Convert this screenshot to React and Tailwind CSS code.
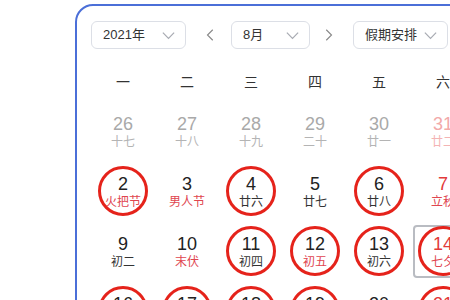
import React from 'react';

const weekdays = ['一', '二', '三', '四', '五', '六', '日'];

// n: day, l: lunar, prev: outside month, rn: red number, rl: red lunar, c: circled, today: selected box
const rows = [
  [
    { n: 26, l: '十七', prev: true },
    { n: 27, l: '十八', prev: true },
    { n: 28, l: '十九', prev: true },
    { n: 29, l: '二十', prev: true },
    { n: 30, l: '廿一', prev: true },
    { n: 31, l: '廿二', prev: true, rn: true, rl: true },
    { n: 1, l: '廿三', rn: true },
  ],
  [
    { n: 2, l: '火把节', rl: true, c: true },
    { n: 3, l: '男人节', rl: true },
    { n: 4, l: '廿六', c: true },
    { n: 5, l: '廿七' },
    { n: 6, l: '廿八', c: true },
    { n: 7, l: '立秋', rn: true, rl: true },
    { n: 8, l: '初一', rn: true },
  ],
  [
    { n: 9, l: '初二' },
    { n: 10, l: '末伏', rl: true },
    { n: 11, l: '初四', c: true },
    { n: 12, l: '初五', rl: true, c: true },
    { n: 13, l: '初六', c: true },
    { n: 14, l: '七夕', rn: true, rl: true, c: true, today: true },
    { n: 15, l: '初八', rn: true },
  ],
  [
    { n: 16, l: '初九', c: true },
    { n: 17, l: '初十', c: true },
    { n: 18, l: '十一', c: true },
    { n: 19, l: '十二', c: true },
    { n: 20, l: '十三' },
    { n: 21, l: '十四', rn: true, c: true },
    { n: 22, l: '中元节', rn: true, rl: true },
  ],
];

const Chevron = ({ dir = 'down', className = '' }) => {
  const d = {
    down: 'M2 5l6 6 6-6',
    left: 'M10 2L4 8l6 6',
    right: 'M6 2l6 6-6 6',
  }[dir];
  return (
    <svg viewBox="0 0 16 16" className={className} fill="none" stroke="currentColor" strokeWidth="1.3">
      <path d={d} />
    </svg>
  );
};

const Select = ({ label, width }) => (
  <div className={`${width} h-[28px] flex items-center justify-between pl-[11px] pr-[9px] border border-[#dcdfe6] rounded-[6px] text-[13px] text-[#333]`}>
    <span>{label}</span>
    <Chevron className="w-[15px] h-[15px] text-[#a8abb2]" />
  </div>
);

const DayCell = ({ d }) => {
  let numColor = 'text-[#222]';
  let lunarColor = 'text-[#333]';
  if (d.prev) {
    numColor = d.rn ? 'text-[#f2a9a9]' : 'text-[#a9a9a9]';
    lunarColor = d.rl ? 'text-[#f4b4b4]' : 'text-[#b4b4b4]';
  } else {
    if (d.rn) numColor = 'text-[#e23a3a]';
    if (d.rl) lunarColor = 'text-[#e0454f]';
  }
  return (
    <div className="relative h-[60px] flex flex-col items-center justify-center">
      {d.today && (
        <div className="absolute left-[2px] right-[2px] top-[4px] bottom-[3px] border-2 border-[#b9bcc2] rounded-[4px]" />
      )}
      <div className={`text-[18px] leading-[20px] ${numColor}`}>{d.n}</div>
      <div className={`text-[12px] leading-[14px] mt-[1px] ${lunarColor}`}>{d.l}</div>
      {d.c && (
        <div className="absolute left-1/2 top-1/2 -translate-x-1/2 -translate-y-1/2 w-[50px] h-[50px] rounded-full border-[3px] border-[#e5231b]" />
      )}
    </div>
  );
};

const App = () => {
  return (
    <div
      className="w-[450px] h-[300px] overflow-hidden bg-white"
      style={{ fontFamily: '"Liberation Sans", "Noto Sans CJK SC", sans-serif' }}
    >
      <div className="ml-[75px] mt-[4px] w-[500px] h-[400px] border-2 border-[#4b6fd8] rounded-tl-[18px] pl-[14px] pt-[15px]">
        {/* toolbar */}
        <div className="flex items-center">
          <Select label="2021年" width="w-[95px]" />
          <Chevron dir="left" className="w-[14px] h-[14px] ml-[18px] text-[#888]" />
          <div className="ml-[13px]">
            <Select label="8月" width="w-[79px]" />
          </div>
          <Chevron dir="right" className="w-[14px] h-[14px] ml-[11px] text-[#888]" />
          <div className="ml-[18px]">
            <Select label="假期安排" width="w-[95px]" />
          </div>
        </div>

        {/* weekday header */}
        <div className="grid grid-cols-7 w-[448px] mt-[18px] h-[30px] items-center">
          {weekdays.map((w) => (
            <div key={w} className="text-center text-[14px] text-[#333]">{w}</div>
          ))}
        </div>

        {/* dates */}
        <div className="mt-[4px] w-[448px]">
          {rows.map((row, i) => (
            <div key={i} className="grid grid-cols-7">
              {row.map((d) => (
                <DayCell key={`${i}-${d.n}`} d={d} />
              ))}
            </div>
          ))}
        </div>
      </div>
    </div>
  );
};

export default App;
